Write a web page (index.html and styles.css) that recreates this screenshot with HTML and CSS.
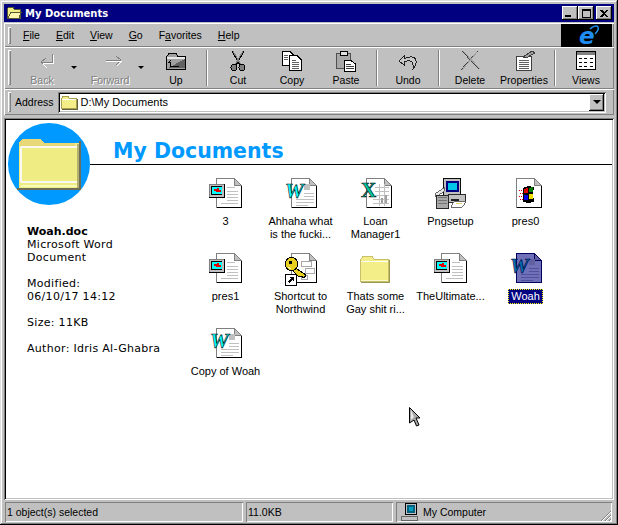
FILE: index.html
```html
<!DOCTYPE html>
<html lang="en">
<head>
<meta charset="utf-8">
<title>My Documents</title>
<link rel="stylesheet" href="styles.css">
</head>
<body>
<svg class="defs" width="0" height="0" aria-hidden="true">
  <defs>
    <symbol id="page" viewBox="0 0 34 32">
      <path d="M7.5 .5H25.5L32.5 7.5V29.5H7.5Z" fill="#fff" stroke="#808080"/>
      <path d="M32.5 7.5V29.5H7.5" fill="none" stroke="#000"/>
      <path d="M25.5 .5V7.5H32.5Z" fill="#c0c0c0" stroke="#808080"/>
    </symbol>
    <symbol id="ppt" viewBox="0 0 34 32">
      <use href="#page" width="34" height="32"/>
      <path d="M18 9h8M18 13h11M18 16h11M18 19h11M18 22h11M12 25h17" stroke="#c0c0c0" fill="none"/>
      <rect x="0" y="6" width="15" height="13" fill="#c0c0c0"/>
      <path d="M15.5 6V19.5H0" fill="none" stroke="#000"/>
      <path d="M0 6.5H15M.5 6V19" fill="none" stroke="#808080"/>
      <rect x="2" y="8" width="11" height="9" fill="#000"/>
      <rect x="3" y="9" width="10" height="7" fill="#00ffff"/>
      <path d="M5 11h3v-1h2v2h2v2H7v-1H5Z" fill="#e00000"/>
    </symbol>
    <symbol id="word" viewBox="0 0 34 32">
      <use href="#page" width="34" height="32"/>
      <rect x="20" y="6" width="6" height="6" fill="#c0c0c0"/>
      <path d="M20 15h10M20 18h10M12 21h18M12 24h18M12 27h12" stroke="#c0c0c0" fill="none"/>
      <text class="ico-w" x="1" y="20" fill="#00ffff" stroke="#000" stroke-width=".6">W</text>
    </symbol>
    <symbol id="folder" viewBox="0 0 34 32">
      <path d="M1.5 6.5L4 3.5H13L15.5 6.5H29.5V28.5H1.5Z" fill="#f3ee88" stroke="#c8c068"/>
      <path d="M2 8H29" stroke="#fff" fill="none"/>
      <path d="M2 29.5H30.500V7" stroke="#9c9850" fill="none"/>
      <path d="M2 27.5H29" stroke="#fcfac8" fill="none"/>
    </symbol>
  </defs>
</svg>

<div class="window">
  <header class="titlebar">
    <svg class="title-icon" viewBox="0 0 16 16" width="16" height="16"><path d="M1 4L3 2H7L8 4H14V13H1Z" fill="#f3ee88" stroke="#5a5a30"/><path d="M2 13L5 7H15.500L13 13Z" fill="#fff6b0" stroke="#5a5a30"/></svg>
    <span class="title-text">My Documents</span>
    <div class="caption-buttons">
      <button class="cap"><span class="cap-min"></span></button>
      <button class="cap"><span class="cap-max"></span></button>
      <button class="cap cap-close"><svg viewBox="0 0 8 7" width="8" height="7"><path d="M0 0h2l2 2 2-2h2L5 3.500 8 7H6L4 5 2 7H0l3-3.500Z" fill="#000"/></svg></button>
    </div>
  </header>

  <div class="band band-menu">
    <nav class="menu">
      <i class="grip"></i>
      <span><u>F</u>ile</span>
      <span><u>E</u>dit</span>
      <span><u>V</u>iew</span>
      <span><u>G</u>o</span>
      <span>F<u>a</u>vorites</span>
      <span><u>H</u>elp</span>
    </nav>
    <div class="ie-logo">
      <svg viewBox="0 0 32 23" width="32" height="23">
        <path d="M19 5C22 2 26 1 27 3C28 5 26 8 24 10" fill="none" stroke="#1e90f0" stroke-width="1.500"/>
        <text class="ico-e" x="8" y="20" fill="#1e8cf0">e</text>
      </svg>
    </div>
  </div>

  <div class="band toolbar">
    <i class="grip grip-tall"></i>
    <div class="tool tool-nav disabled">
      <svg viewBox="0 0 24 20" width="24" height="20"><path d="M18.500 3V11H8M12 7L7 11L12 16" fill="none" stroke="#808080"/><path d="M19.500 4V12H9M13 17l-4-4" fill="none" stroke="#fff"/></svg>
      <span>Back</span>
    </div>
    <i class="drop"></i>
    <div class="tool tool-nav tool-fwd disabled">
      <svg viewBox="0 0 24 20" width="24" height="20"><path d="M4 9H19M14 5L19 9L14 14" fill="none" stroke="#808080"/><path d="M4 10H20M15 15l5-5" fill="none" stroke="#fff"/></svg>
      <span>Forward</span>
    </div>
    <i class="drop drop-fwd"></i>
    <div class="tool tool-up">
      <svg viewBox="0 0 24 20" width="24" height="20"><path d="M2.500 5.500L5 2.500H12L14 5.500H21.500V18.500H2.500Z" fill="#a0a0a0" stroke="#000"/><path d="M3 6h18v2H3Z" fill="#e8e8e8"/><path d="M4 17L21 8V17Z" fill="#606060"/><path d="M7 9L4.500 11.500H6.500V15H15" fill="none" stroke="#000"/></svg>
      <span>Up</span>
    </div>
    <i class="sep"></i>
    <div class="tool">
      <svg viewBox="0 0 24 22" width="24" height="22"><path d="M6 1L14 15M18 1L10 15" stroke="#000" stroke-width="1.300" fill="none"/><path d="M7 1L15 15M17 1L9 15" stroke="#808080" fill="none"/><circle cx="8" cy="17.500" r="3" fill="#808080" stroke="#000"/><circle cx="16" cy="17.500" r="3" fill="#808080" stroke="#000"/></svg>
      <span>Cut</span>
    </div>
    <div class="tool">
      <svg viewBox="0 0 24 22" width="24" height="22"><path d="M2.500 1.500H10L13 4.500V15.500H2.500Z" fill="#fff" stroke="#000"/><path d="M9.500 5.500H17L21.500 10V20.500H9.500Z" fill="#fff" stroke="#000"/><path d="M12 10h4M12 12h7M12 14h7M12 16h7M12 18h7M4 5h4M4 7h4M4 9h4" stroke="#606060" fill="none"/></svg>
      <span>Copy</span>
    </div>
    <div class="tool">
      <svg viewBox="0 0 24 22" width="24" height="22"><path d="M2.500 3.500H16.500V18.500H2.500Z" fill="#a8a8a8" stroke="#505050"/><path d="M6 1.500H13V5H6Z" fill="#e0e0e0" stroke="#000"/><path d="M10.500 10.500H17L21.500 14V21.500H10.500Z" fill="#fff" stroke="#000"/><path d="M12 14h5M12 16h8M12 18h8" stroke="#404040" fill="none"/></svg>
      <span>Paste</span>
    </div>
    <i class="sep"></i>
    <div class="tool">
      <svg viewBox="0 0 24 22" width="24" height="22"><path d="M3 11L8 6V9C15 5 21 7 20 13C19.500 16 18 18 17 19C17.500 16 18 12 14 11C12 10.500 10 11 8 12V15Z" fill="#c8c8c8" stroke="#202020"/></svg>
      <span>Undo</span>
    </div>
    <i class="sep"></i>
    <div class="tool">
      <svg viewBox="0 0 24 22" width="24" height="22"><path d="M4 1L21 19M20 1L3 20" stroke="#404040" fill="none"/><path d="M5 1L22 19M19 2L4 20" stroke="#a0a0a0" fill="none"/></svg>
      <span>Delete</span>
    </div>
    <div class="tool">
      <svg viewBox="0 0 24 22" width="24" height="22"><path d="M4.500 6.500H19.500V20.500H4.500Z" fill="#fff" stroke="#404040"/><path d="M7 10h10M7 12h10M7 14h10M7 16h10M7 18h10" stroke="#606060" fill="none"/><path d="M11 7L20 1L23 3L14 8Z" fill="#a0a0a0" stroke="#404040"/></svg>
      <span>Properties</span>
    </div>
    <i class="sep"></i>
    <div class="tool">
      <svg viewBox="0 0 24 22" width="24" height="22"><path d="M2.500 1.500H21.500V19.500H2.500Z" fill="#fff" stroke="#000"/><path d="M3 2h18v3H3Z" fill="#808080"/><path d="M5 8h3v1H5ZM10 8h3v1h-3ZM16 8h3v1h-3ZM5 12h3v1H5ZM10 12h3v1h-3ZM16 12h3v1h-3ZM5 16h3v1H5ZM10 16h3v1h-3ZM16 16h3v1h-3Z" fill="#000"/></svg>
      <span>Views</span>
    </div>
  </div>

  <div class="band address">
    <i class="grip grip-addr"></i>
    <span class="address-label">Address</span>
    <div class="address-field">
      <svg class="field-icon" viewBox="0 0 17 15" width="17" height="15"><path d="M.5 3.500L2 1.500H7L8.500 3.500H15.500V13.500H.5Z" fill="#f3ee88" stroke="#a8a050"/><path d="M1 4.500H15" stroke="#fff" fill="none"/><path d="M1 14.500H16.500V4" stroke="#606040" fill="none"/></svg>
      <span>D:\My Documents</span>
      <button class="combo"><i></i></button>
    </div>
  </div>

  <main class="content">
    <div class="banner-circle">
      <svg viewBox="0 0 64 54" width="64" height="54"><path d="M2 5L5 1H24L27 5H62V50H2Z" fill="#f0ec84"/><path d="M2 5L5 1H24L27 5H58V8H2Z" fill="#e8d878"/><path d="M4 9H60M4 9V44M4 44H60" stroke="#f8f8f0" stroke-width="2" fill="none"/><path d="M4 48H60" stroke="#fafab8" stroke-width="2" fill="none"/><path d="M0 52H64V3H62V50H0Z" fill="#6e6e58"/><path d="M60 6H62V50H60Z" fill="#b4b070"/></svg>
    </div>
    <div class="banner"><h1>My Documents</h1></div>
    <div class="body">
      <aside class="details">
        <p><b>Woah.doc</b><br>Microsoft Word<br>Document</p>
        <p>Modified:<br>06/10/17 14:12</p>
        <p>Size: 11KB</p>
        <p>Author: Idris Al-Ghabra</p>
      </aside>
      <section class="files">
        <figure class="file"><svg class="icon"><use href="#ppt"/></svg><figcaption>3</figcaption></figure>
        <figure class="file"><svg class="icon"><use href="#word"/></svg><figcaption>Ahhaha what is the fucki...</figcaption></figure>
        <figure class="file">
          <svg class="icon" viewBox="0 0 34 32">
            <use href="#page" width="34" height="32"/>
            <path d="M16 9H30M16 13H30M16 17H30M14 21H30M14 25H30M20 6V28M25 6V28" stroke="#c0c0c0" fill="none"/>
            <path d="M22 25v-5h2v5ZM26 25v-8h2v8Z" fill="#a0a0a0"/>
            <text class="ico-x" x="2" y="19" fill="#00c8a0" stroke="#000" stroke-width=".6">X</text>
          </svg>
          <figcaption>Loan Manager1</figcaption>
        </figure>
        <figure class="file">
          <svg class="icon" viewBox="0 0 34 34">
            <path d="M9.500 .5H27.500V18.500H9.500Z" fill="#c0c0c0" stroke="#000"/>
            <rect x="12" y="3" width="13" height="12" fill="#000080"/>
            <rect x="14" y="5" width="9" height="8" fill="#00c8e8"/>
            <path d="M15 8h7v1h-7Z" fill="#fff"/>
            <path d="M1 16L10 10V14L1 20Z" fill="#e8e8e8" stroke="#606060"/>
            <path d="M1.500 18.500H14.500V32.500H1.500Z" fill="#a8a8a8" stroke="#202020"/>
            <path d="M3 21h10M3 24h10M3 27h10" stroke="#707070" fill="none"/>
            <path d="M14 18H32.500V26H14Z" fill="#c0c0c0" stroke="#202020"/>
            <path d="M17 22h8v2h-8Z" fill="#202020"/>
            <path d="M20 25H33L29 31H17Z" fill="#fff" stroke="#606060"/>
            <path d="M22 27h7" stroke="#e0d060"/>
          </svg>
          <figcaption>Pngsetup</figcaption>
        </figure>
        <figure class="file">
          <svg class="icon" viewBox="0 0 34 32">
            <use href="#page" width="34" height="32"/>
            <path d="M14 10L19 8L25 9L24 16L25 24L19 25L14 24Z" fill="#000"/>
            <path d="M20 10l4-1v5h-4Z" fill="#008000"/>
            <path d="M15 11l4-1v5h-4Z" fill="#e00000"/>
            <path d="M15 17h4v5h-4Z" fill="#0000e0"/>
            <path d="M20 16h4v5h-4Z" fill="#f0e000"/>
            <path d="M10 12h3M11 15h3M10 18h3M11 21h3" stroke="#e00000" stroke-dasharray="1 1" fill="none"/>
          </svg>
          <figcaption>pres0</figcaption>
        </figure>
        <figure class="file"><svg class="icon"><use href="#ppt"/></svg><figcaption>pres1</figcaption></figure>
        <figure class="file">
          <svg class="icon" viewBox="0 0 34 32">
            <use href="#page" width="34" height="32"/>
            <path d="M17 8h10v5H17ZM21 15h9v5h-9ZM17 22h6v4h-6Z" fill="none" stroke="#a8a8a8"/>
            <path d="M10 14L22 22L20 25L17 23L15 24L8 17Z" fill="#e8d020" stroke="#000"/>
            <circle cx="7.500" cy="11" r="6.500" fill="#e8d020" stroke="#000"/>
            <path d="M5 8h3v3H5Z" fill="#000"/>
            <path d="M4 14l3 2" stroke="#fff4a0"/>
            <rect x="1.500" y="21.500" width="11" height="11" fill="#fff" stroke="#000"/>
            <path d="M4.500 29.500L9 25M6 24.500H9.500V28" stroke="#000" stroke-width="1.500" fill="none"/>
          </svg>
          <figcaption>Shortcut to Northwind</figcaption>
        </figure>
        <figure class="file"><svg class="icon"><use href="#folder"/></svg><figcaption>Thats some Gay shit ri...</figcaption></figure>
        <figure class="file"><svg class="icon"><use href="#ppt"/></svg><figcaption>TheUltimate...</figcaption></figure>
        <figure class="file selected">
          <svg class="icon" viewBox="0 0 34 32">
            <path d="M7.500 .5H25.500L32.500 7.500V29.500H7.500Z" fill="#7070b8" stroke="#000060"/>
            <path d="M25.500 .5V7.500H32.500Z" fill="#6060a0" stroke="#000060"/>
            <rect x="20" y="6" width="6" height="6" fill="#6060a0"/>
            <path d="M20 15h10M20 18h10M12 21h18M12 24h18M12 27h12" stroke="#50509c" fill="none"/>
            <text class="ico-w" x="1" y="20" fill="#0070b0" stroke="#000040" stroke-width=".6">W</text>
          </svg>
          <figcaption>Woah</figcaption>
        </figure>
        <figure class="file"><svg class="icon"><use href="#word"/></svg><figcaption>Copy of Woah</figcaption></figure>
      </section>
    </div>
    <svg class="cursor" viewBox="0 0 12 20" width="12" height="20"><path d="M.5 .5L11 11H7L10 18L7.500 19L5 13L.5 16Z" fill="#a8a8a8" stroke="#000"/><path d="M2 3V13L5 10Z" fill="#e8e8e8"/></svg>
  </main>

  <footer class="status">
    <div class="panel panel-a">1 object(s) selected</div>
    <div class="panel panel-b">11.0KB</div>
    <div class="panel panel-c">
      <svg viewBox="0 0 18 18" width="18" height="18"><path d="M4.500 .5H15.500V11.500H4.500Z" fill="#c0c0c0" stroke="#000"/><rect x="6" y="2" width="8" height="8" fill="#006080"/><rect x="8" y="4" width="4" height="4" fill="#00a0c0"/><path d="M1 13H16L17 17H0Z" fill="#c0c0c0" stroke="#404040" stroke-width=".7"/></svg>
      <span>My Computer</span>
      <svg class="resize" viewBox="0 0 12 12" width="12" height="12"><path d="M11 1L1 11M11 5L5 11M11 9L9 11" stroke="#808080" fill="none"/><path d="M11 2L2 11M11 6L6 11M11 10L10 11" stroke="#fff" fill="none"/></svg>
    </div>
  </footer>
</div>
</body>
</html>
```

FILE: styles.css
```css
* { box-sizing: border-box; }
html, body { margin: 0; padding: 0; }
body { width: 618px; height: 525px; overflow: hidden; background: #c0c0c0; font: 11px/13px "Liberation Sans", Arial, sans-serif; color: #000; }
.defs { position: absolute; }
svg { display: block; shape-rendering: crispEdges; flex: none; }

.window {
  width: 618px; height: 525px; padding: 4px 4px 2px 4px; background: #c0c0c0;
  display: flex; flex-direction: column;
  box-shadow: inset -1px -1px 0 #000, inset 1px 1px 0 #dfdfdf, inset -2px -2px 0 #808080, inset 2px 2px 0 #fff;
}

.titlebar { height: 18px; background: #000080; color: #fff; display: flex; align-items: center; padding: 0 2px; flex: none; }
.title-icon { margin-right: 3px; }
.title-text { font: bold 10px/16px "DejaVu Sans", Verdana, sans-serif; margin-top: 2px; }
.caption-buttons { margin-left: auto; display: flex; }
.cap {
  width: 16px; height: 14px; padding: 0; border: 0; background: #c0c0c0; display: flex; align-items: center; justify-content: center;
  box-shadow: inset -1px -1px 0 #000, inset 1px 1px 0 #fff, inset -2px -2px 0 #808080;
}
.cap-close { margin-left: 2px; }
.cap-min { width: 6px; height: 2px; background: #000; margin: 6px 4px 0 0; }
.cap-max { width: 9px; height: 9px; border: 1px solid #000; border-top-width: 2px; }

.band { flex: none; display: flex; align-items: center; box-shadow: inset 1px 1px 0 #fff, inset -1px -1px 0 #808080; }
.grip { display: block; flex: none; width: 3px; height: 17px; background: #c0c0c0; box-shadow: inset 1px 1px 0 #fff, inset -1px -1px 0 #808080; }

.band-menu { height: 24px; margin-top: 1px; padding-left: 4px; }
.menu { display: flex; align-items: center; gap: 16px; flex: 1; font-size: 10.5px; }
.menu .grip { margin-right: -4px; }
.ie-logo { width: 51px; height: 23px; background: #000; margin-right: 2px; display: flex; justify-content: center; }
.ie-logo svg { shape-rendering: auto; overflow: visible; }
.ico-e { font: italic bold 23px/23px "DejaVu Sans", sans-serif; }
.ico-w { font: italic bold 21px "Liberation Serif", serif; }
.ico-x { font: bold 21px "Liberation Serif", serif; }

.toolbar { height: 42px; padding: 3px 0 0 4px; align-items: flex-start; }
.grip-tall { height: 35px; margin-right: 5px; }
.tool { width: 54px; height: 36px; display: flex; flex-direction: column; align-items: center; flex: none; }
.tool svg { height: 22px; }
.tool span { margin-top: 2px; font-size: 10.5px; line-height: 13px; white-space: nowrap; }
.tool-nav { width: 52px; }
.tool-nav svg { margin-left: 8px; }
.tool-fwd { margin-left: 4px; }
.tool-up { width: 52px; margin-left: 2px; margin-right: 1px; }
.disabled span { color: #808080; text-shadow: 1px 1px 0 #fff; }
.drop { display: block; flex: none; width: 12px; height: 30px; position: relative; }
.drop::after { content: ""; position: absolute; left: 3px; top: 16px; border: 3px solid transparent; border-top: 3px solid #000; border-bottom: 0; }
.drop-fwd::after { left: 2px; }
.sep { display: block; flex: none; width: 2px; height: 36px; margin: 0 3px; border-left: 1px solid #808080; border-right: 1px solid #fff; }

.address { height: 26px; padding: 0 4px; }
.grip-addr { height: 20px; }
.address-label { margin: 0 4px 0 4px; font-size: 10.5px; }
.address-field {
  flex: 1; height: 21px; margin-right: 4px; background: #fff; display: flex; align-items: center; padding-left: 3px;
  box-shadow: inset 1px 1px 0 #808080, inset -1px -1px 0 #fff, inset 2px 2px 0 #000, inset -2px -2px 0 #c0c0c0;
}
.field-icon { margin-right: 3px; }
.combo {
  margin-left: auto; margin-right: 2px; width: 15px; height: 17px; padding: 0; border: 0; background: #c0c0c0; display: flex; align-items: center; justify-content: center;
  box-shadow: inset -1px -1px 0 #000, inset 1px 1px 0 #fff, inset -2px -2px 0 #808080;
}
.combo i { display: block; border: 4px solid transparent; border-top: 4px solid #000; border-bottom: 0; }

.content {
  flex: 1; min-height: 0; margin-top: 3px; background: #fff; position: relative; overflow: hidden; padding: 2px;
  box-shadow: inset 1px 1px 0 #808080, inset -1px -1px 0 #fff, inset 2px 2px 0 #000, inset -2px -2px 0 #c0c0c0;
}
.banner-circle { position: absolute; left: 4px; top: 5px; width: 82px; height: 82px; border-radius: 50%; background: #0099ff; display: flex; align-items: center; justify-content: center; padding-top: 2px; }
.banner { height: 45px; margin-left: 84px; border-bottom: 1px solid #000; display: flex; align-items: flex-end; padding-left: 23px; }
.banner h1 { margin: 0 0 -2px; font: bold 20.5px/30px "DejaVu Sans", Verdana, sans-serif; color: #0099ff; }
.body { display: flex; }
.details { width: 182px; padding: 60px 0 0 21px; font: 11px/13px "DejaVu Sans", Verdana, sans-serif; letter-spacing: .3px; flex: none; }
.details b { letter-spacing: 0; }
.details p { margin: 0 0 13px; }
.files { display: grid; grid-template-columns: repeat(5, 75px); grid-auto-rows: 75px; padding-top: 13px; }
.file { margin: 0; display: flex; flex-direction: column; align-items: center; }
.icon { width: 34px; height: 32px; overflow: visible; }
.file figcaption { margin-top: 4px; padding: 1px; text-align: center; max-width: 73px; }
.selected figcaption { padding: 1px 3px; background: #000080; color: #fff; outline: 1px dotted #ffff00; outline-offset: -1px; }
.cursor { position: absolute; left: 405px; top: 289px; overflow: visible; shape-rendering: auto; }

.status { height: 21px; flex: none; margin-top: 2px; display: flex; gap: 3px; padding-right: 2px; font-size: 10.5px; }
.panel { height: 20px; display: flex; align-items: center; padding-left: 2px; box-shadow: inset 1px 1px 0 #808080, inset -1px -1px 0 #fff; }
.panel-a { width: 238px; margin-left: 1px; }
.panel-b { width: 147px; }
.panel-c { flex: 1; padding-left: 5px; position: relative; gap: 4px; }
.resize { position: absolute; right: 0; bottom: 0; }
```
